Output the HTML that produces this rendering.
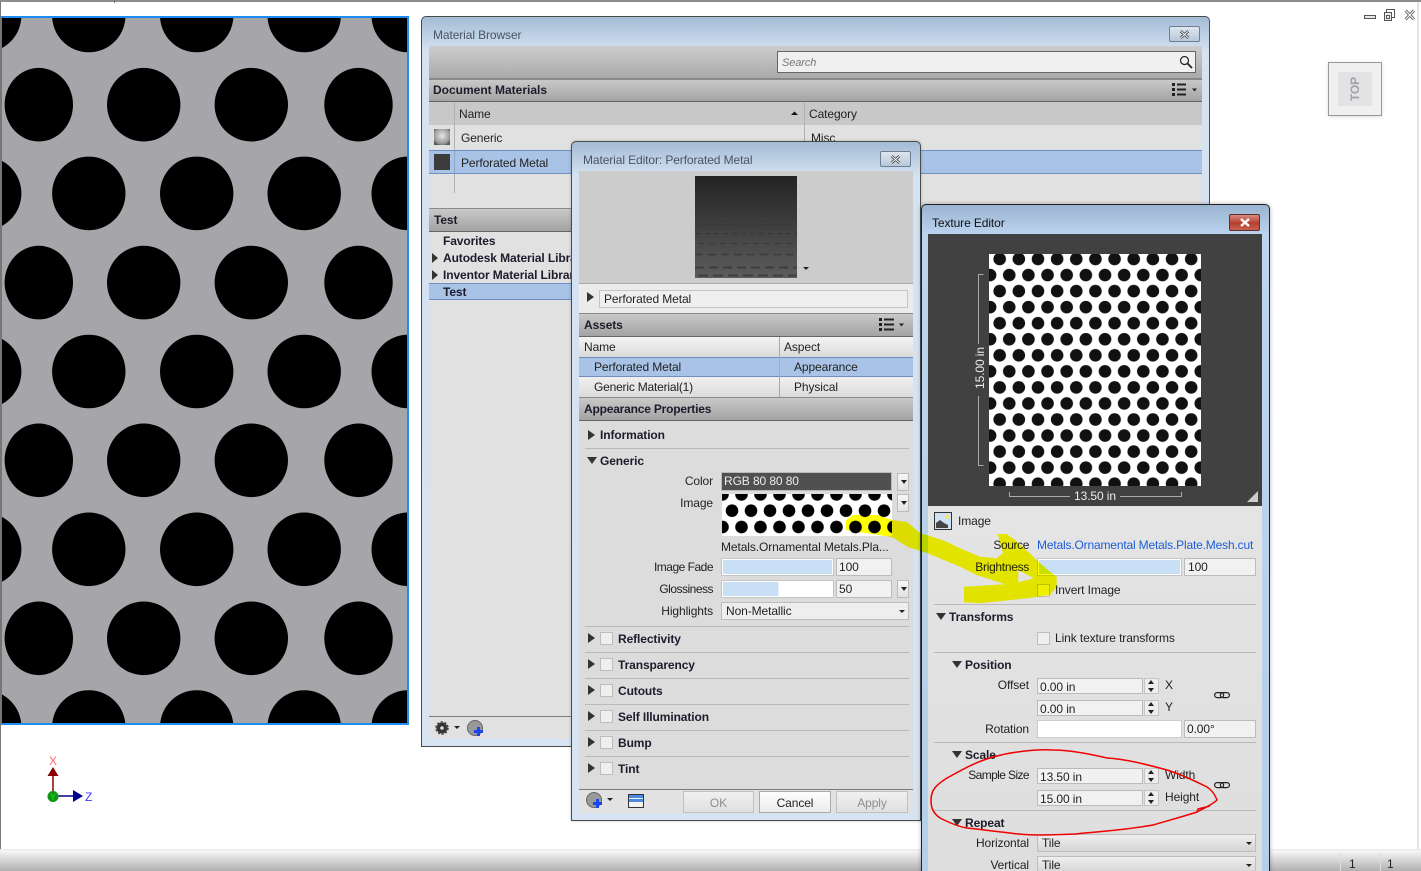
<!DOCTYPE html>
<html><head><meta charset="utf-8"><style>
html,body{margin:0;padding:0;height:871px;overflow:hidden}
body{width:1421px;position:relative;background:#fff;font:12px/16px "Liberation Sans",sans-serif;color:#222;letter-spacing:-.1px}
div{position:absolute;box-sizing:border-box}
svg{position:absolute;overflow:visible}
#root{left:0;top:0;width:1421px;height:871px;overflow:hidden}
.t{white-space:nowrap;height:16px}
.b{font-weight:bold;color:#1c1c2c}
.r{text-align:right}
.hd{background:linear-gradient(#c9c9c9,#a3a3a3);border-top:1px solid #8a8a8a;border-bottom:1px solid #666}
.win{border:1px solid #4a4a4a;border-radius:5px 5px 0 0;background:linear-gradient(#a4bbd5 0,#d4e2f2 34px,#d6e3f2 100%)}
.f{background:#f1f1f1;border:1px solid #bbb;padding:1px 0 0 2px;line-height:15px;white-space:nowrap}
.w{background:#fff;border:1px solid #ccc}
.bar{background:#c8dff5;border:2px solid #fff;outline:1px solid #c4c4c4;outline-offset:-1px}
.sep{height:1px;background:#b9b9b9}
.btn{background:linear-gradient(#f6f6f6,#e2e2e2);border:1px solid #bbb}
.btn:after{content:"";position:absolute;left:3px;top:6px;border:3px solid transparent;border-top:4px solid #222;border-bottom:0}
.cb{width:13px;height:13px;background:#efefef;border:1px solid #bdbdbd}
.tr{width:0;height:0;border-left:7px solid #333;border-top:5px solid transparent;border-bottom:5px solid transparent}
.td{width:0;height:0;border-top:7px solid #333;border-left:5px solid transparent;border-right:5px solid transparent}
.sel{background:linear-gradient(#efefef,#d4d4d4);border:1px solid #bdbdbd;padding-left:4px;line-height:16px}
.sel:after{content:"";position:absolute;right:3px;top:7px;border:3px solid transparent;border-top:3px solid #222;border-bottom:0}
.spin{width:15px;background:#ededed;border:1px solid #c4c4c4}
.spin:before{content:"";position:absolute;left:3px;top:1px;border:3px solid transparent;border-bottom:4px solid #222;border-top:0}
.spin:after{content:"";position:absolute;left:3px;bottom:1px;border:3px solid transparent;border-top:4px solid #222;border-bottom:0}
.pb{text-align:center;line-height:22px;background:linear-gradient(#f0f0f0,#e0e0e0);border:1px solid #c0c0c0;color:#8e8e8e}
</style></head><body><div id="root">

<!-- app frame -->
<div style="left:0;top:0;width:1421px;height:2px;background:#8c8c8c"></div>
<div style="left:114px;top:0;width:1px;height:3px;background:#777"></div>
<div style="left:0;top:2px;width:1px;height:848px;background:#777"></div>
<div style="left:1417px;top:2px;width:2px;height:848px;background:#e4e4e4"></div>

<!-- viewport -->
<svg style="left:0;top:16px" width="409" height="709" viewBox="0 16 409 709">
<defs><clipPath id="vc"><rect x="0" y="16" width="409" height="709"/></clipPath>
<g id="ra"><ellipse cx="38.800" cy="0" rx="34.200" ry="36.800"/><ellipse cx="143.700" cy="0" rx="36.700" ry="36.800"/><ellipse cx="251.300" cy="0" rx="36.700" ry="36.800"/><ellipse cx="358.500" cy="0" rx="34.200" ry="36.800"/></g>
<g id="rb"><ellipse cx="-15.300" cy="0" rx="36.700" ry="36.800"/><ellipse cx="88.800" cy="0" rx="36.700" ry="36.800"/><ellipse cx="196.700" cy="0" rx="36.700" ry="36.800"/><ellipse cx="304.200" cy="0" rx="36.700" ry="36.800"/><ellipse cx="408" cy="0" rx="36.500" ry="36.800"/></g></defs>
<rect x="0" y="16" width="409" height="709" fill="#a6a6aa"/>
<g clip-path="url(#vc)" fill="#000">
<use href="#rb" y="15.500"/><use href="#ra" y="104.700"/><use href="#rb" y="193.400"/><use href="#ra" y="282.600"/><use href="#rb" y="371.500"/><use href="#ra" y="460.300"/><use href="#rb" y="549.300"/><use href="#ra" y="638.300"/><use href="#rb" y="727"/>
</g>
<rect x="1" y="17" width="407" height="707" fill="none" stroke="#1c8cf0" stroke-width="2"/>
</svg>
<div style="left:0;top:16px;width:1px;height:710px;background:#777"></div>

<!-- triad -->
<svg style="left:0;top:0" width="100" height="820">
<path d="M53 776V792" stroke="#8a0000" stroke-width="1.500"/>
<path d="M53 767L58.500 776H47.500Z" fill="#8a0000"/>
<path d="M58 796H74" stroke="#00008c" stroke-width="1.500"/>
<path d="M73 790L83 796L73 802Z" fill="#00008c"/>
<circle cx="53" cy="796.500" r="5.500" fill="#0c9a0c"/>
<path d="M53 797V800M53 797L51 794M53 797L55 794" stroke="#3fc03f" stroke-width="1" fill="none"/>
<text x="49" y="765" font-family="Liberation Sans" font-size="12" fill="#ff6a6a">X</text>
<text x="85" y="801" font-family="Liberation Sans" font-size="12" fill="#3a3aff">Z</text>
</svg>

<!-- window controls + viewcube -->
<svg style="left:1360px;top:5px" width="60" height="20" fill="none">
<rect x="4.500" y="10.500" width="11" height="3" fill="#e8e8e8" stroke="#555"/>
<rect x="24.500" y="7.500" width="7" height="8" fill="#eee" stroke="#555"/><path d="M26.500 7V4.500H34.500V12.500H32" stroke="#555"/><rect x="26.500" y="10.500" width="3" height="3" stroke="#555"/>
<path d="M45.500 5.500L54 14.500M54 5.500L45.500 14.500" stroke="#666" stroke-width="3"/>
<path d="M45.500 5.500L54 14.500M54 5.500L45.500 14.500" stroke="#fff" stroke-width="1"/>
</svg>
<div style="left:1328px;top:62px;width:54px;height:54px;background:#f0f0f0;border:1px solid #999;box-shadow:0 1px 4px #ddd"></div>
<div style="left:1338px;top:72px;width:34px;height:34px;background:#e3e3e6"></div>
<div class="t b" style="left:1340px;top:81px;width:30px;text-align:center;color:#a0a0a8;transform:rotate(-90deg);font-size:12px">TOP</div>

<!-- status bar -->
<div style="left:0;top:849px;width:1421px;height:22px;background:linear-gradient(#e8e8e8 0,#f6f6f6 2px,#b0b0b0 100%)"></div>
<div style="left:1340px;top:853px;width:1px;height:18px;background:#ddd"></div>
<div style="left:1380px;top:853px;width:1px;height:18px;background:#ddd"></div>
<div class="t" style="left:1349px;top:856px">1</div>
<div class="t" style="left:1387px;top:856px">1</div>

<!-- Material Browser -->
<div class="win" style="left:421px;top:16px;width:789px;height:731px"></div>
<div class="t" style="left:433px;top:27px;color:#4a5564">Material Browser</div>
<div style="left:1169px;top:26px;width:31px;height:16px;background:linear-gradient(#dde6f0,#b8c8da);border:1px solid #6f7f90;border-radius:2px"></div>
<svg style="left:1179px;top:30px" width="11" height="9"><path d="M1.500 1L9.500 8M9.500 1L1.500 8" stroke="#444" stroke-width="2.600"/><path d="M1.500 1L9.500 8M9.500 1L1.500 8" stroke="#fff" stroke-width=".9"/></svg>
<div style="left:429px;top:46px;width:773px;height:33px;background:linear-gradient(#cdcdcd,#aaa);border-bottom:1px solid #888"></div>
<div class="f" style="left:777px;top:51px;width:419px;height:22px;background:#f0f0f0;border:1px solid #666;font-style:italic;color:#777;padding:1px 0 0 4px;line-height:21px;font-size:11px">Search</div>
<svg style="left:1179px;top:55px" width="14" height="14" fill="none"><circle cx="5.500" cy="5.500" r="4" stroke="#222" stroke-width="1.200"/><path d="M8.500 8.500L13 13" stroke="#222" stroke-width="1.800"/></svg>
<div class="hd" style="left:429px;top:79px;width:773px;height:23px"></div>
<div class="t b" style="left:433px;top:82px;letter-spacing:0">Document Materials</div>
<svg style="left:1171px;top:83px" width="28" height="14"><path d="M1 1.500h3M1 6.500h3M1 11.500h3" stroke="#222" stroke-width="3"/><path d="M6 1.500h9M6 6.500h9M6 11.500h9" stroke="#222" stroke-width="2"/><path d="M21 5.500h5l-2.500 3z" fill="#222"/></svg>
<div style="left:429px;top:102px;width:773px;height:23px;background:#c8c8c8"></div>
<div style="left:429px;top:125px;width:773px;height:83px;background:#e1e1e1"></div>
<div style="left:454px;top:102px;width:1px;height:91px;background:#b0b0b0"></div>
<div style="left:804px;top:102px;width:1px;height:48px;background:#b0b0b0"></div>
<div class="t" style="left:459px;top:106px">Name</div>
<svg style="left:790px;top:110px" width="10" height="6"><path d="M1 5L4.500 1.500L8 5Z" fill="#111"/></svg>
<div class="t" style="left:809px;top:106px">Category</div>
<div style="left:434px;top:129px;width:16px;height:16px;background:radial-gradient(circle at 50% 42%,#e8e8e8 0,#b0b0b0 45%,#8c8c8c 72%,#5a5a5a 78%)"></div>
<div class="t" style="left:461px;top:130px">Generic</div>
<div class="t" style="left:811px;top:130px">Misc</div>
<div style="left:429px;top:150px;width:773px;height:24px;background:#a9c3e6;border-top:1px solid #6f8fc0;border-bottom:1px solid #6f8fc0"></div>
<div style="left:454px;top:151px;width:1px;height:22px;background:#8ea6c8"></div>
<div style="left:434px;top:154px;width:16px;height:16px;background:#3c3c3c"></div>
<div class="t" style="left:461px;top:155px">Perforated Metal</div>
<div class="hd" style="left:429px;top:208px;width:773px;height:24px"></div>
<div class="t b" style="left:434px;top:212px">Test</div>
<div style="left:429px;top:232px;width:773px;height:484px;background:#e1e1e1"></div>
<div class="t b" style="left:443px;top:233px">Favorites</div>
<div class="t b" style="left:443px;top:250px">Autodesk Material Library</div>
<div class="t b" style="left:443px;top:267px">Inventor Material Library</div>
<div class="tr" style="left:432px;top:253px;border-left-width:6px"></div>
<div class="tr" style="left:432px;top:270px;border-left-width:6px"></div>
<div style="left:429px;top:283px;width:773px;height:17px;background:#a9c3e6;border-top:1px solid #6f8fc0;border-bottom:1px solid #6f8fc0"></div>
<div class="t b" style="left:443px;top:284px">Test</div>
<div style="left:429px;top:716px;width:773px;height:23px;background:#e1e1e1;border-top:1px solid #7a7a7a"></div>
<svg style="left:434px;top:720px" width="50" height="18">
<circle cx="8" cy="8" r="5.500" fill="#333" stroke="#444" stroke-width="2.500" stroke-dasharray="2 1.500"/><circle cx="8" cy="8" r="1.800" fill="#ddd"/>
<path d="M20 6h6l-3 3z" fill="#222"/>
<circle cx="41" cy="8" r="7.500" fill="#999" stroke="#666"/><rect x="40" y="10" width="9" height="3" fill="#1a46f0"/><rect x="43" y="7" width="3" height="9" fill="#1a46f0"/>
</svg>

<!-- Material Editor -->
<div class="win" style="left:571px;top:141px;width:350px;height:680px;box-shadow:0 0 3px rgba(0,0,0,.2)"></div>
<div class="t" style="left:583px;top:152px;color:#4a5564">Material Editor: Perforated Metal</div>
<div style="left:880px;top:151px;width:31px;height:16px;background:linear-gradient(#dde6f0,#b8c8da);border:1px solid #6f7f90;border-radius:2px"></div>
<svg style="left:890px;top:155px" width="11" height="9"><path d="M1.500 1L9.500 8M9.500 1L1.500 8" stroke="#444" stroke-width="2.600"/><path d="M1.500 1L9.500 8M9.500 1L1.500 8" stroke="#fff" stroke-width=".9"/></svg>
<div style="left:579px;top:171px;width:334px;height:112px;background:#cccccc"></div>
<svg style="left:695px;top:176px" width="102" height="102">
<defs><linearGradient id="pg" x1="0" y1="0" x2="0" y2="1"><stop offset="0" stop-color="#232323"/><stop offset=".3" stop-color="#343434"/><stop offset="1" stop-color="#5c5c5c"/></linearGradient></defs>
<rect width="102" height="102" fill="url(#pg)"/>
<g fill="none" stroke="#2e2e2e" opacity=".6">
<path d="M0 33.500H102" stroke-dasharray="2 2" opacity=".5"/>
<path d="M0 40.500H102" stroke-dasharray="3 2" opacity=".6"/>
<path d="M2 48.500H102" stroke-dasharray="4 3" opacity=".7"/>
<path d="M1 57.500H102" stroke-dasharray="5 4"/>
<path d="M3 67.500H102" stroke-dasharray="6 5"/>
<path d="M0 78.500H102" stroke-dasharray="8 5" stroke-width="1.500"/>
<path d="M0 91.500H102" stroke-dasharray="9 5" stroke-width="2"/>
<path d="M3 99.500H102" stroke-dasharray="10 5" stroke-width="2"/>
</g>
</svg>
<svg style="left:802px;top:266px" width="8" height="5"><path d="M1 1h6l-3 3z" fill="#222"/></svg>
<div style="left:579px;top:283px;width:334px;height:30px;background:#ebebeb;border-top:1px solid #aaa"></div>
<div class="tr" style="left:587px;top:292px"></div>
<div class="f" style="left:599px;top:290px;width:309px;height:18px;padding-left:4px;background:#efefef;border-color:#c4c4c4">Perforated Metal</div>
<div class="hd" style="left:579px;top:313px;width:334px;height:24px"></div>
<div class="t b" style="left:584px;top:317px">Assets</div>
<svg style="left:879px;top:318px" width="28" height="14"><path d="M0 1.500h3M0 6.500h3M0 11.500h3" stroke="#222" stroke-width="3"/><path d="M5 1.500h10M5 6.500h10M5 11.500h10" stroke="#222" stroke-width="2"/><path d="M20 5.500h5l-2.500 3z" fill="#222"/></svg>
<div style="left:579px;top:337px;width:334px;height:20px;background:linear-gradient(#f4f4f4,#dadada)"></div>
<div class="t" style="left:584px;top:339px">Name</div>
<div class="t" style="left:784px;top:339px">Aspect</div>
<div style="left:579px;top:357px;width:334px;height:20px;background:#a9c3e6;border-top:1px solid #6f8fc0;border-bottom:1px solid #6f8fc0"></div>
<div class="t" style="left:594px;top:359px">Perforated Metal</div>
<div class="t" style="left:794px;top:359px">Appearance</div>
<div style="left:579px;top:377px;width:334px;height:20px;background:linear-gradient(#f0f0f0,#dcdcdc)"></div>
<div class="t" style="left:594px;top:379px;letter-spacing:-.2px">Generic Material(1)</div>
<div class="t" style="left:794px;top:379px">Physical</div>
<div style="left:779px;top:337px;width:1px;height:60px;background:#aaa"></div>
<div class="hd" style="left:579px;top:397px;width:334px;height:24px"></div>
<div class="t b" style="left:584px;top:401px;letter-spacing:-.2px">Appearance Properties</div>
<div style="left:579px;top:421px;width:334px;height:368px;background:#dcdcdc"></div>

<div class="tr" style="left:588px;top:430px"></div><div class="t b" style="left:600px;top:427px">Information</div>
<div class="sep" style="left:585px;top:448px;width:324px"></div>
<div class="td" style="left:587px;top:457px"></div><div class="t b" style="left:600px;top:453px">Generic</div>
<div class="t r" style="left:613px;top:473px;width:100px">Color</div>
<div style="left:721px;top:472px;width:171px;height:19px;background:#505050;border:1px solid #bbb;color:#eee;padding-left:2px;line-height:16px">RGB 80 80 80</div>
<div class="btn" style="left:897px;top:473px;width:12px;height:18px"></div>
<div class="t r" style="left:613px;top:495px;width:100px">Image</div>
<svg style="left:722px;top:494px" width="170" height="43">
<defs><pattern id="sw" patternUnits="userSpaceOnUse" x="10" y="16.700" width="19" height="32.600"><circle cx="0" cy="0" r="6.300" fill="#000"/><circle cx="19" cy="0" r="6.300" fill="#000"/><circle cx="0" cy="32.600" r="6.300" fill="#000"/><circle cx="19" cy="32.600" r="6.300" fill="#000"/><circle cx="9.500" cy="16.300" r="6.300" fill="#000"/></pattern></defs>
<rect width="170" height="42" fill="#fff"/><rect width="170" height="42" fill="url(#sw)"/>
</svg>
<div class="btn" style="left:897px;top:494px;width:12px;height:18px"></div>
<div class="t" style="left:721px;top:539px">Metals.Ornamental Metals.Pla...</div>
<div class="t r" style="left:613px;top:559px;width:100px;letter-spacing:-.5px">Image Fade</div>
<div class="bar" style="left:721px;top:558px;width:113px;height:18px"></div>
<div class="f" style="left:836px;top:558px;width:56px;height:18px">100</div>
<div class="t r" style="left:613px;top:581px;width:100px;letter-spacing:-.5px">Glossiness</div>
<div style="left:721px;top:580px;width:113px;height:18px;background:linear-gradient(90deg,#c8dff5 51%,#fff 51%);border:2px solid #fff;outline:1px solid #c4c4c4;outline-offset:-1px"></div>
<div class="f" style="left:836px;top:580px;width:56px;height:18px">50</div>
<div class="btn" style="left:897px;top:580px;width:12px;height:18px"></div>
<div class="t r" style="left:613px;top:603px;width:100px">Highlights</div>
<div class="sel" style="left:721px;top:602px;width:188px;height:18px;background:#eee;line-height:16px">Non-Metallic</div>
<div class="sep" style="left:585px;top:626px;width:324px"></div>

<div class="tr" style="left:588px;top:633px"></div><div class="cb" style="left:600px;top:632px"></div><div class="t b" style="left:618px;top:631px">Reflectivity</div>
<div class="sep" style="left:585px;top:652px;width:324px"></div>
<div class="tr" style="left:588px;top:659px"></div><div class="cb" style="left:600px;top:658px"></div><div class="t b" style="left:618px;top:657px">Transparency</div>
<div class="sep" style="left:585px;top:678px;width:324px"></div>
<div class="tr" style="left:588px;top:685px"></div><div class="cb" style="left:600px;top:684px"></div><div class="t b" style="left:618px;top:683px">Cutouts</div>
<div class="sep" style="left:585px;top:704px;width:324px"></div>
<div class="tr" style="left:588px;top:711px"></div><div class="cb" style="left:600px;top:710px"></div><div class="t b" style="left:618px;top:709px">Self Illumination</div>
<div class="sep" style="left:585px;top:730px;width:324px"></div>
<div class="tr" style="left:588px;top:737px"></div><div class="cb" style="left:600px;top:736px"></div><div class="t b" style="left:618px;top:735px">Bump</div>
<div class="sep" style="left:585px;top:756px;width:324px"></div>
<div class="tr" style="left:588px;top:763px"></div><div class="cb" style="left:600px;top:762px"></div><div class="t b" style="left:618px;top:761px">Tint</div>

<div style="left:579px;top:789px;width:334px;height:24px;background:#e2e2e2;border-top:1px solid #7a7a7a"></div>
<svg style="left:586px;top:792px" width="60" height="18">
<circle cx="8" cy="8" r="7.500" fill="#999" stroke="#666"/><rect x="7" y="10" width="9" height="3" fill="#1a46f0"/><rect x="10" y="7" width="3" height="9" fill="#1a46f0"/>
<path d="M21 6h6l-3 3z" fill="#222"/>
<rect x="42.500" y="2.500" width="15" height="13" fill="#f2f2f2" stroke="#333"/><rect x="43" y="3" width="14" height="3" fill="#4a8ae0"/><rect x="43" y="7" width="14" height="3" fill="#4a8ae0"/>
</svg>
<div class="pb" style="left:683px;top:791px;width:71px;height:22px">OK</div>
<div class="pb" style="left:759px;top:791px;width:72px;height:22px;color:#222;background:linear-gradient(#fdfdfd,#ececec);border-color:#aaa">Cancel</div>
<div class="pb" style="left:836px;top:791px;width:72px;height:22px">Apply</div>

<!-- Texture Editor -->
<div class="win" style="left:921px;top:204px;width:349px;height:680px;border-color:#222;background:linear-gradient(#9ab3d0 0,#bcd4ee 30px,#b4cfe9 100%);box-shadow:0 0 4px rgba(0,0,0,.3)"></div>
<div class="t" style="left:932px;top:215px;color:#111">Texture Editor</div>
<div style="left:1229px;top:214px;width:31px;height:17px;background:linear-gradient(#d88a80,#b5402f 55%,#c8604f);border:1px solid #5a3030;border-radius:2px"></div>
<svg style="left:1239px;top:218px" width="12" height="9"><path d="M2 1L10 8M10 1L2 8" stroke="#fff" stroke-width="2.400"/></svg>
<div style="left:928px;top:234px;width:334px;height:272px;background:#414141"></div>
<svg style="left:989px;top:254px" width="212" height="232">
<defs><pattern id="tx" patternUnits="userSpaceOnUse" x="1.100" y="5" width="19.150" height="32.100">
<circle cx="9.575" cy="0" r="6.300" fill="#111"/><circle cx="9.575" cy="32.100" r="6.300" fill="#111"/>
<circle cx="0" cy="16.050" r="6.300" fill="#111"/><circle cx="19.150" cy="16.050" r="6.300" fill="#111"/>
</pattern></defs>
<rect width="212" height="232" fill="#fff"/><rect width="212" height="232" fill="url(#tx)"/>
</svg>
<svg style="left:978px;top:274px" width="9" height="192" fill="none" stroke="#aaa"><path d="M5.500 .5H.5V191.500H5.500"/></svg>
<div style="left:973px;top:344px;width:14px;height:52px;background:#414141"></div>
<div class="t" style="left:950px;top:360px;width:60px;text-align:center;color:#eee;transform:rotate(-90deg)">15.00 in</div>
<svg style="left:1009px;top:492px" width="174" height="6" fill="none" stroke="#aaa"><path d="M.5 0V4.500H172.500V0"/></svg>
<div style="left:1070px;top:488px;width:50px;height:16px;background:#414141;text-align:center;color:#eee;line-height:16px">13.50 in</div>
<svg style="left:1247px;top:491px" width="14" height="12"><path d="M0 11L11 0V11Z" fill="#ccc"/></svg>

<div style="left:928px;top:506px;width:334px;height:365px;background:linear-gradient(#e4e4e4,#dedede)"></div>
<svg style="left:934px;top:512px" width="18" height="18"><rect x=".5" y=".5" width="17" height="17" fill="#cfe2f5" stroke="#333"/><path d="M2 16V11L6 8L10 11L14 13V16Z" fill="#444"/><rect x="11" y="3" width="4" height="4" fill="#f5e27a"/></svg>
<div class="t" style="left:958px;top:513px">Image</div>
<div class="t r" style="left:929px;top:537px;width:100px;letter-spacing:-.4px">Source</div>
<div class="t" style="left:1037px;top:537px;color:#1c5ed6;width:220px;overflow:hidden;letter-spacing:-.17px">Metals.Ornamental Metals.Plate.Mesh.cut</div>
<div class="t r" style="left:929px;top:559px;width:100px;letter-spacing:-.3px">Brightness</div>
<div class="bar" style="left:1037px;top:558px;width:145px;height:18px"></div>
<div class="f" style="left:1184px;top:558px;width:72px;height:18px;padding-left:3px">100</div>
<div class="cb" style="left:1037px;top:584px"></div>
<div class="t" style="left:1055px;top:582px">Invert Image</div>
<div class="sep" style="left:934px;top:604px;width:322px"></div>
<div class="td" style="left:936px;top:613px"></div><div class="t b" style="left:949px;top:609px">Transforms</div>
<div class="cb" style="left:1037px;top:632px"></div>
<div class="t" style="left:1055px;top:630px">Link texture transforms</div>
<div class="sep" style="left:934px;top:652px;width:322px"></div>
<div class="td" style="left:952px;top:661px"></div><div class="t b" style="left:965px;top:657px">Position</div>
<div class="t r" style="left:929px;top:677px;width:100px">Offset</div>
<div class="f" style="left:1037px;top:678px;width:106px;height:16px">0.00 in</div>
<div class="spin" style="left:1144px;top:678px;height:16px"></div>
<div class="t" style="left:1165px;top:677px">X</div>
<div class="f" style="left:1037px;top:700px;width:106px;height:16px">0.00 in</div>
<div class="spin" style="left:1144px;top:700px;height:16px"></div>
<div class="t" style="left:1165px;top:699px">Y</div>
<svg style="left:1214px;top:691px" width="16" height="8" fill="none" stroke="#222" stroke-width="1.200"><rect x=".6" y="1.600" width="9" height="5" rx="2.500"/><rect x="6.400" y="1.600" width="9" height="5" rx="2.500"/></svg>
<div class="t r" style="left:929px;top:721px;width:100px">Rotation</div>
<div class="w" style="left:1037px;top:720px;width:145px;height:18px"></div>
<div class="f" style="left:1184px;top:720px;width:72px;height:18px">0.00°</div>
<div class="sep" style="left:934px;top:742px;width:322px"></div>
<div class="td" style="left:952px;top:751px"></div><div class="t b" style="left:965px;top:747px">Scale</div>
<div class="t r" style="left:929px;top:767px;width:100px;letter-spacing:-.6px">Sample Size</div>
<div class="f" style="left:1037px;top:768px;width:106px;height:16px">13.50 in</div>
<div class="spin" style="left:1144px;top:768px;height:16px"></div>
<div class="t" style="left:1165px;top:767px">Width</div>
<div class="f" style="left:1037px;top:790px;width:106px;height:16px">15.00 in</div>
<div class="spin" style="left:1144px;top:790px;height:16px"></div>
<div class="t" style="left:1165px;top:789px">Height</div>
<svg style="left:1214px;top:781px" width="16" height="8" fill="none" stroke="#222" stroke-width="1.200"><rect x=".6" y="1.600" width="9" height="5" rx="2.500"/><rect x="6.400" y="1.600" width="9" height="5" rx="2.500"/></svg>
<div class="sep" style="left:934px;top:810px;width:322px"></div>
<div class="td" style="left:952px;top:819px"></div><div class="t b" style="left:965px;top:815px">Repeat</div>
<div class="t r" style="left:929px;top:835px;width:100px">Horizontal</div>
<div class="sel" style="left:1037px;top:834px;width:219px;height:18px">Tile</div>
<div class="t r" style="left:929px;top:857px;width:100px">Vertical</div>
<div class="sel" style="left:1037px;top:856px;width:219px;height:18px">Tile</div>

<!-- yellow marker -->
<svg style="left:0;top:0;mix-blend-mode:multiply" width="1421" height="871">
<path fill="#ffff00" fill-rule="evenodd" d="M846 520L853 515H877L892 520L907 522L920 533L945 541L960 548.300L980 556.700L996.700 558.300L1003 553L997.700 534H1006.700L1015 540L1031.700 555L1038.300 561.700L1050 571.700L1056.700 576.700V586.700L1050 595L1026.700 598.300L980 603.300L964 602.300V586.700L1005 584.300L976.700 575L960 566.700L927 553L908 547L892 537L846 530ZM1018.300 570L1034 578.300L1018.300 582.300Z"/>
</svg>
<!-- red marker -->
<svg style="left:0;top:0" width="1421" height="871" fill="none" stroke="#f00000" stroke-width="1.500" stroke-linejoin="round">
<path d="M993 757C975 762 960 771 947 778C936 785 931 790 931 800C931 808 933 813 940 818C950 823 960 827 967 828C985 830 1000 832 1010 833C1030 836 1050 835 1075 834C1095 832 1125 830 1153 825C1170 820 1185 816 1197 812C1205 808 1213 804 1217 800C1214 792 1210 789 1207 787C1195 781 1180 774 1167 770C1145 764 1125 759 1107 758C1090 754 1070 750 1053 750C1040 749 1015 751 993 757M1197 812L1198 809L1210 806"/>
</svg>
</div></body></html>
